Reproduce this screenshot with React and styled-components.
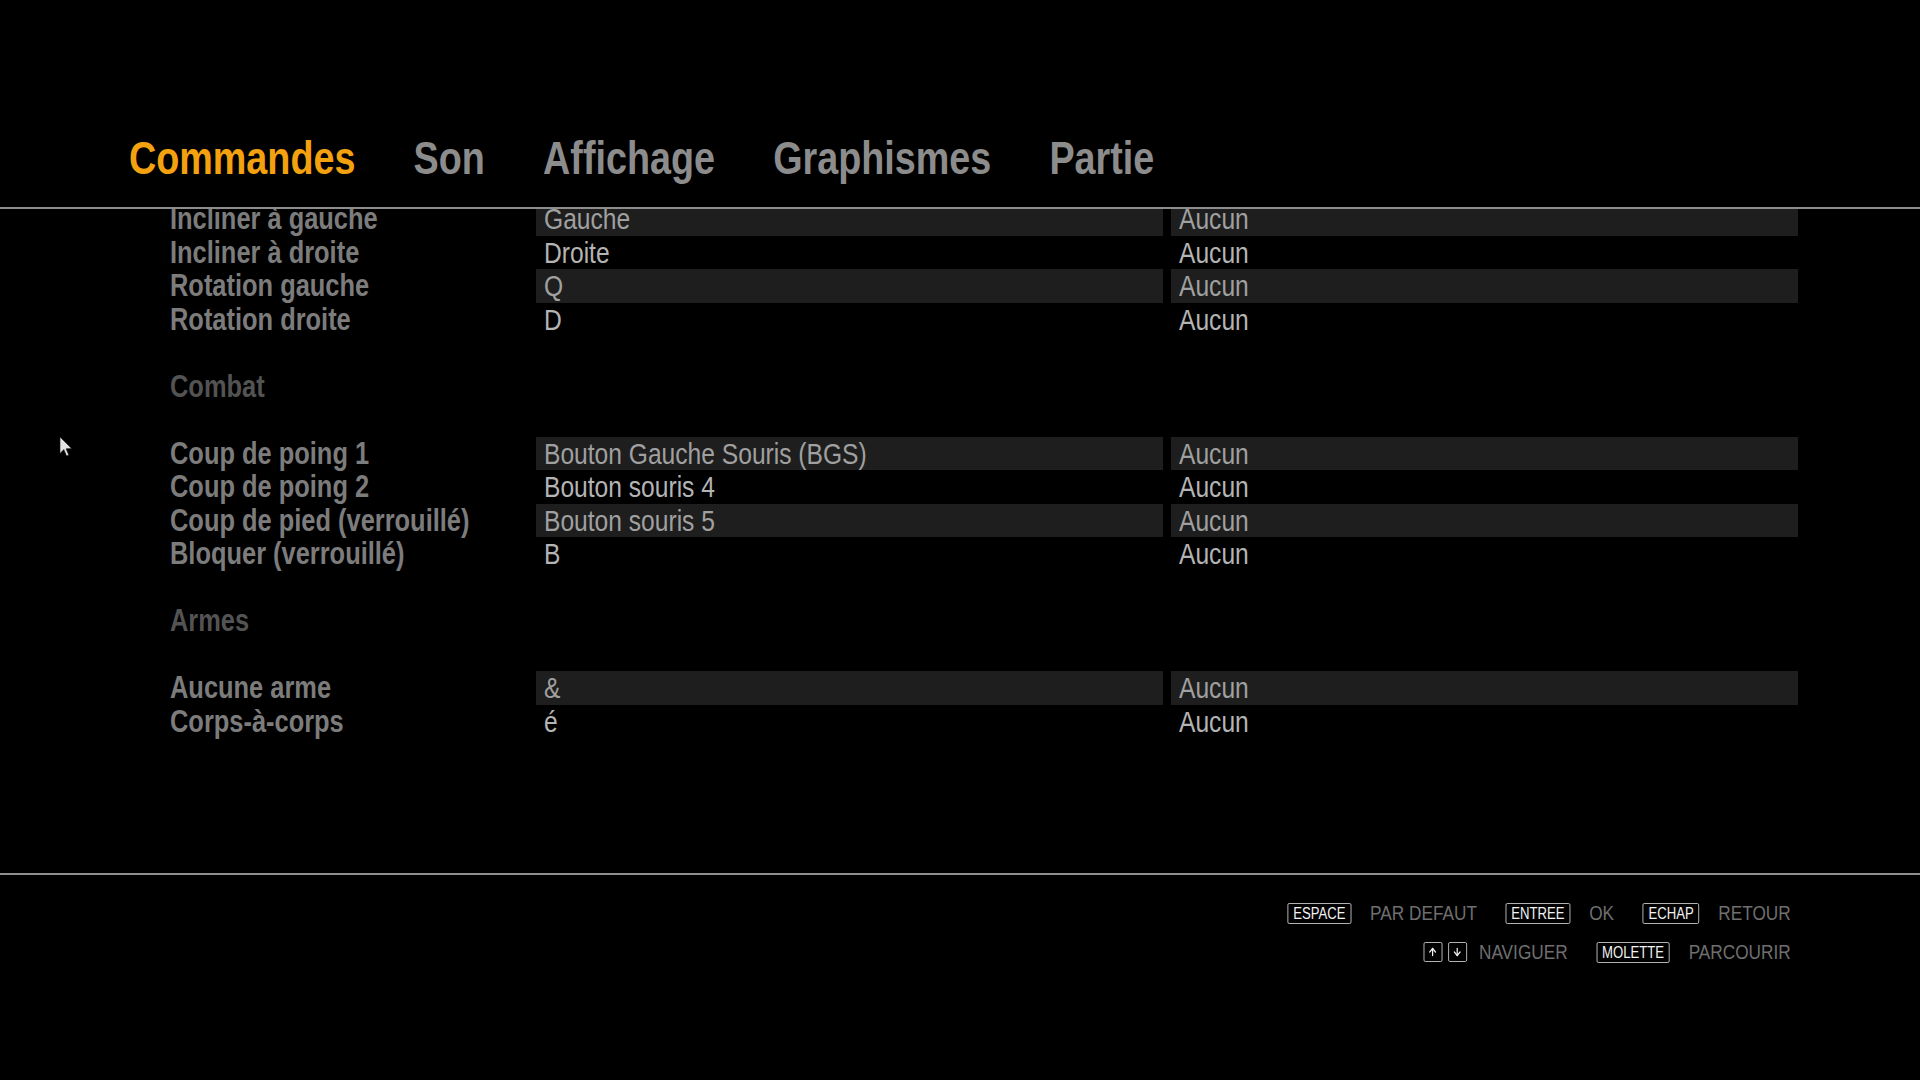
import React from 'react';
import styled, { createGlobalStyle } from 'styled-components';
import { ArrowUp, ArrowDown } from 'lucide-react';

const GlobalStyle = createGlobalStyle`
  html, body {
    margin: 0;
    padding: 0;
    background: #000;
    overflow: hidden;
  }
  * {
    box-sizing: border-box;
  }
`;

// the game uses a condensed grotesque; Liberation Sans squeezed to Arial Narrow width
const SANS = `"Liberation Sans", Arial, sans-serif`;
const SQUEEZE = 0.82;

const tabs = ['Commandes', 'Son', 'Affichage', 'Graphismes', 'Partie'];

// null = empty spacer row
const rows = [
  { label: 'Incliner à gauche', k1: 'Gauche', k2: 'Aucun', hl: true },
  { label: 'Incliner à droite', k1: 'Droite', k2: 'Aucun' },
  { label: 'Rotation gauche', k1: 'Q', k2: 'Aucun', hl: true },
  { label: 'Rotation droite', k1: 'D', k2: 'Aucun' },
  null,
  { section: 'Combat' },
  null,
  { label: 'Coup de poing 1', k1: 'Bouton Gauche Souris (BGS)', k2: 'Aucun', hl: true },
  { label: 'Coup de poing 2', k1: 'Bouton souris 4', k2: 'Aucun' },
  { label: 'Coup de pied (verrouillé)', k1: 'Bouton souris 5', k2: 'Aucun', hl: true },
  { label: 'Bloquer (verrouillé)', k1: 'B', k2: 'Aucun' },
  null,
  { section: 'Armes' },
  null,
  { label: 'Aucune arme', k1: '&', k2: 'Aucun', hl: true },
  { label: 'Corps-à-corps', k1: 'é', k2: 'Aucun' },
];

export default function App() {
  return (
    <>
      <GlobalStyle />
      <Page>
        <TabBar>
          <TabStrip>
            {tabs.map((t, i) => (
              <Tab key={t} $active={i === 0}>
                {t}
              </Tab>
            ))}
          </TabStrip>
        </TabBar>
        <Divider />
        <ListArea>
          <List>
            {rows.map((r, i) => {
              if (!r) return <Row key={i} />;
              if (r.section)
                return (
                  <Row key={i}>
                    <Section>
                      <Narrow>{r.section}</Narrow>
                    </Section>
                  </Row>
                );
              return (
                <Row key={i}>
                  <Label>
                    <Narrow>{r.label}</Narrow>
                  </Label>
                  <KeyCell $hl={r.hl}>
                    <Narrow>{r.k1}</Narrow>
                  </KeyCell>
                  <KeyCell $hl={r.hl}>
                    <Narrow>{r.k2}</Narrow>
                  </KeyCell>
                </Row>
              );
            })}
          </List>
        </ListArea>
        <Divider />
        <Footer>
          <FooterStrip>
            <HintRow>
              <Hint>
                <KeyBox>ESPACE</KeyBox>
                <HintLabel>PAR DEFAUT</HintLabel>
              </Hint>
              <Hint>
                <KeyBox>ENTREE</KeyBox>
                <HintLabel>OK</HintLabel>
              </Hint>
              <Hint>
                <KeyBox>ECHAP</KeyBox>
                <HintLabel>RETOUR</HintLabel>
              </Hint>
            </HintRow>
            <HintRow>
              <Hint>
                <ArrowKeys>
                  <ArrowBox>
                    <ArrowUp size={12} strokeWidth={3} />
                  </ArrowBox>
                  <ArrowBox>
                    <ArrowDown size={12} strokeWidth={3} />
                  </ArrowBox>
                </ArrowKeys>
                <HintLabel>NAVIGUER</HintLabel>
              </Hint>
              <Hint>
                <KeyBox>MOLETTE</KeyBox>
                <HintLabel>PARCOURIR</HintLabel>
              </Hint>
            </HintRow>
          </FooterStrip>
        </Footer>
        <Cursor width="14" height="21" viewBox="0 0 14 21">
          <path
            d="M1 1 L1 17.5 L4.8 13.6 L7.6 20 L9.8 19 L7.1 12.8 L12.6 12.6 Z"
            fill="#e4e4e4"
            stroke="#1a1a1a"
            strokeWidth="0.6"
          />
        </Cursor>
      </Page>
    </>
  );
}

const Page = styled.div`
  position: relative;
  width: 1920px;
  height: 1080px;
  background: #000;
  display: flex;
  flex-direction: column;
`;

const Narrow = styled.span`
  display: inline-block;
  white-space: nowrap;
  transform: scaleX(${SQUEEZE});
  transform-origin: left center;
`;

const TabBar = styled.nav`
  height: 207px;
  padding: 133px 0 0 129px;
`;

const TabStrip = styled.div`
  display: flex;
  gap: 71px;
  transform: scaleX(${SQUEEZE});
  transform-origin: left center;
`;

const Tab = styled.div`
  font-family: ${SANS};
  font-weight: 700;
  font-size: 46px;
  line-height: 50px;
  white-space: nowrap;
  color: ${({ $active }) => ($active ? '#f3a10f' : '#8c8c8c')};
`;

const Divider = styled.div`
  height: 2px;
  width: 100%;
  background: #8e8e8e;
`;

const ListArea = styled.div`
  height: 664px;
  overflow: hidden;
`;

const List = styled.div`
  margin-top: -7px;
  display: flex;
  flex-direction: column;
`;

const Row = styled.div`
  height: 33.5px;
  display: grid;
  grid-template-columns: 358px 627px 627px;
  column-gap: 8px;
  padding-left: 170px;
  align-items: stretch;
`;

const Label = styled.div`
  font-family: ${SANS};
  font-weight: 700;
  font-size: 31px;
  line-height: 33.5px;
  color: #7c7c7c;
`;

const Section = styled(Label)`
  color: #535353;
`;

const KeyCell = styled.div`
  font-family: ${SANS};
  font-size: 30px;
  line-height: 33.5px;
  padding-left: 8px;
  background: ${({ $hl }) => ($hl ? '#1e1e1e' : 'transparent')};
  color: ${({ $hl }) => ($hl ? '#a0a0a0' : '#b4b4b4')};
  margin-bottom: 1px;
`;

const Footer = styled.div`
  display: flex;
  justify-content: flex-end;
  padding: 25px 129px 0 0;
`;

const FooterStrip = styled.div`
  display: flex;
  flex-direction: column;
  align-items: flex-end;
  gap: 13px;
  transform: scaleX(${SQUEEZE});
  transform-origin: right center;
`;

const HintRow = styled.div`
  display: flex;
  align-items: center;
  gap: 35px;
  height: 26px;
`;

const Hint = styled.div`
  display: flex;
  align-items: center;
  gap: 23px;
`;

const KeyBox = styled.span`
  display: inline-flex;
  align-items: center;
  height: 21px;
  padding: 1px 6px 0;
  border: 1px solid #c4c4c4;
  border-radius: 2px;
  font-family: ${SANS};
  font-size: 16px;
  line-height: 1;
  color: #f2f2f2;
`;

const ArrowKeys = styled.div`
  display: flex;
  gap: 7px;
  margin-right: -8px;
`;

const ArrowBox = styled.span`
  display: inline-flex;
  align-items: center;
  justify-content: center;
  width: 23px;
  height: 20px;
  border: 1px solid #c4c4c4;
  border-radius: 2px;
  color: #f2f2f2;
`;

const HintLabel = styled.span`
  font-family: ${SANS};
  font-size: 21px;
  white-space: nowrap;
  color: #6f6f6f;
`;

const Cursor = styled.svg`
  position: absolute;
  left: 59px;
  top: 436px;
`;
